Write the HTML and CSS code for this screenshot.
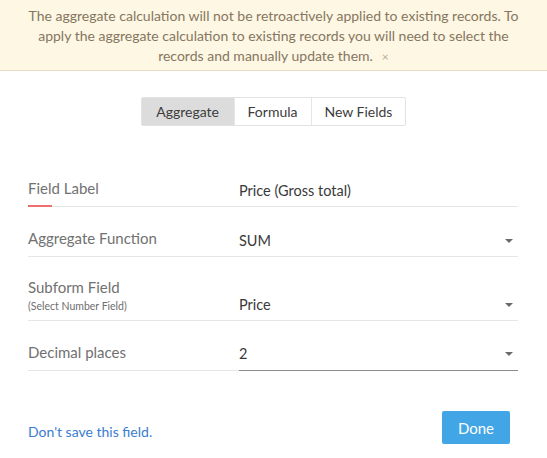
FILE: index.html
```html
<!DOCTYPE html>
<html>
<head>
<meta charset="utf-8">
<link rel="stylesheet" href="styles.css">
</head>
<body>
<div class="banner">The aggregate calculation will not be retroactively applied to existing records. To apply the aggregate calculation to existing records you will need to select the records and manually update them.<span class="close">×</span></div>

<div class="tabs-wrap">
  <div class="tabs">
    <div class="tab active">Aggregate</div>
    <div class="tab">Formula</div>
    <div class="tab">New Fields</div>
  </div>
</div>

<div class="form">
  <div class="row r1">
    <div class="label accent"><span>Field Label</span></div>
    <div class="value"><span>Price (Gross total)</span></div>
  </div>
  <div class="row r2">
    <div class="label"><span>Aggregate Function</span></div>
    <div class="value"><span>SUM</span><i class="arrow"></i></div>
  </div>
  <div class="row r3">
    <div class="label"><span>Subform Field</span><small>(Select Number Field)</small></div>
    <div class="value"><span>Price</span><i class="arrow"></i></div>
  </div>
  <div class="row r4">
    <div class="label"><span>Decimal places</span></div>
    <div class="value focus"><span>2</span><i class="arrow"></i></div>
  </div>
</div>

<div class="footer">
  <a class="skip">Don't save this field.</a>
  <button class="done">Done</button>
</div>
</body>
</html>
```

FILE: styles.css
```css
* { box-sizing: border-box; }
body {
  margin: 0;
  font-family: Lato, "Open Sans", "Liberation Sans", sans-serif;
  background: #fff;
  color: #333;
}
.banner {
  background: #fdf7e4;
  border-bottom: 1px solid #e8dcc2;
  color: #86765f;
  font-size: 14px;
  line-height: 20px;
  text-align: center;
  padding: 6px 16px 3px;
  height: 71px;
}
.close {
  margin-left: 9px;
  color: #b8ad99;
  font-size: 12px;
}
.tabs-wrap {
  display: flex;
  justify-content: center;
  padding-top: 26px;
}
.tabs {
  display: flex;
  border: 1px solid #e2e2e2;
  border-radius: 2px;
  height: 29px;
}
.tab {
  font-size: 14px;
  color: #3c3c3c;
  line-height: 27px;
  padding: 0 13px;
  border-left: 1px solid #e6e6e6;
}
.tab:first-child { border-left: none; }
.tab.active { background: #dcdcdc; width: 92px; text-align: center; }
.form {
  margin: 31px 29px 0 28px;
}
.row {
  display: flex;
  height: 50px;
}
.row.r3 { height: 64px; }
.label, .value {
  display: flex;
  border-bottom: 1px solid #e6e6e6;
}
.label {
  width: 211px;
  flex-direction: column;
  justify-content: flex-end;
  padding-bottom: 9px;
  color: #717171;
  font-size: 15px;
  line-height: 18px;
  position: relative;
}
.label small {
  font-size: 10.5px;
  line-height: 14px;
  margin-top: 3px;
  color: #6e6e6e;
  margin-bottom: -2px;
}
.accent::after {
  content: "";
  position: absolute;
  left: 0;
  bottom: -1px;
  width: 24px;
  height: 2px;
  background: #ef6e6e;
}
.value {
  flex: 1;
  align-items: flex-end;
  justify-content: space-between;
  padding-bottom: 6px;
  font-size: 14.5px;
  line-height: 18px;
  color: #3a3a3a;
}
.value.focus { border-bottom-color: #8c8c8c; padding-bottom: 7px; }
.arrow {
  width: 0;
  height: 0;
  border-left: 4px solid transparent;
  border-right: 4px solid transparent;
  border-top: 4px solid #6a6a6a;
  margin: 0 5px 7px 0;
}
.footer {
  display: flex;
  justify-content: space-between;
  align-items: flex-end;
  margin: 40px 37px 0 28px;
}
.skip {
  color: #3a7ccf;
  font-size: 14px;
  line-height: 18px;
  margin-bottom: 3px;
}
.done {
  background: #42a5e6;
  color: #fff;
  border: none;
  border-radius: 2px;
  width: 68px;
  height: 33px;
  font-family: inherit;
  font-size: 15px;
  padding: 0;
}
```
